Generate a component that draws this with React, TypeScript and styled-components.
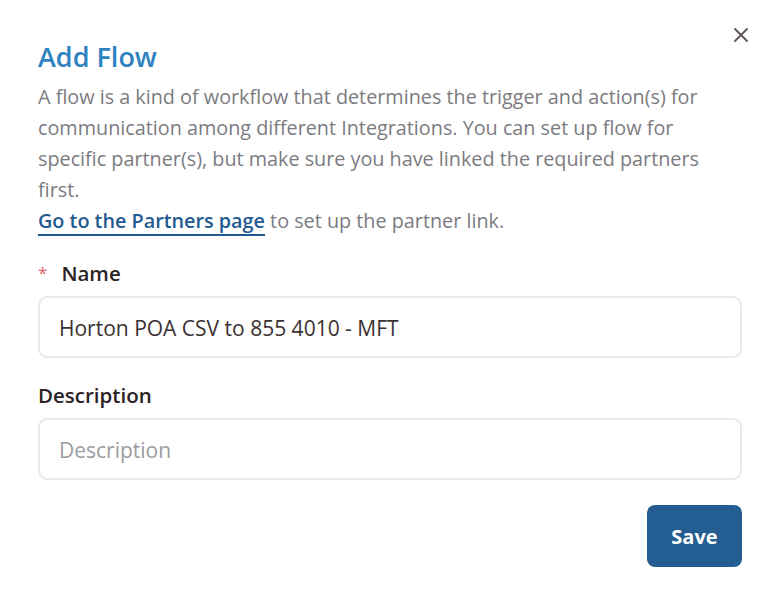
import styled, { createGlobalStyle } from "styled-components";

const GlobalStyle = createGlobalStyle`
    html, body {
        margin: 0;
        padding: 0;
        background: #fff;
        font-family: "Open Sans", "Noto Sans", sans-serif;
    }
`;

const App = () => {
    return (
        <>
            <GlobalStyle />
            <StyledModal>
                <CloseButton aria-label="Close">
                    <svg width="16" height="16" viewBox="0 0 16 16">
                        <path d="M2 2 L14 14 M14 2 L2 14" stroke="#5a5258" strokeWidth="1.8" strokeLinecap="round" />
                    </svg>
                </CloseButton>
                <Title>Add Flow</Title>
                <Intro>
                    A flow is a kind of workflow that determines the trigger and action(s) for communication among
                    different Integrations. You can set up flow for specific partner(s), but make sure you have linked
                    the required partners first.
                    <br />
                    <PartnerLink href="#">Go to the Partners page</PartnerLink> to set up the partner link.
                </Intro>
                <Field>
                    <Label $required>Name</Label>
                    <TextInput defaultValue="Horton POA CSV to 855 4010 - MFT" />
                </Field>
                <Field>
                    <Label>Description</Label>
                    <TextInput placeholder="Description" />
                </Field>
                <Footer>
                    <SaveButton>Save</SaveButton>
                </Footer>
            </StyledModal>
        </>
    );
};

export default App;

const StyledModal = styled.div`
    position: relative;
    width: 778px;
    height: 595px;
    box-sizing: border-box;
    padding: 38px 36px 0 38px;
    background: #fff;
`;

const CloseButton = styled.button`
    position: absolute;
    top: 25px;
    right: 27px;
    width: 20px;
    height: 20px;
    padding: 0;
    border: none;
    background: transparent;
    display: flex;
    align-items: center;
    justify-content: center;
    cursor: pointer;
`;

const Title = styled.h2`
    margin: 0;
    font-size: 27px;
    font-weight: 600;
    line-height: 38px;
    color: #2f82c0;
`;

const Intro = styled.p`
    margin: 5px 0 0;
    font-size: 19.8px;
    line-height: 31px;
    color: #7b7b7f;
`;

const PartnerLink = styled.a`
    color: #1f5a91;
    font-weight: 600;
    text-decoration: none;
    border-bottom: 2px solid #1f5a91;
`;

const Field = styled.div`
    display: flex;
    flex-direction: column;
    gap: 9px;
    margin-top: 23px;
`;

const Label = styled.label<{ $required?: boolean }>`
    font-size: 20.5px;
    font-weight: 600;
    line-height: 28px;
    color: #2b2224;

    &::before {
        content: ${(p) => (p.$required ? '"*"' : "none")};
        color: #e0606a;
        font-weight: 400;
        font-size: 17px;
        margin-right: 14px;
        vertical-align: 2px;
    }
`;

const TextInput = styled.input`
    box-sizing: border-box;
    height: 62px;
    width: 100%;
    padding: 2px 19px 0;
    border: 2px solid #e8e8e8;
    border-radius: 9px;
    font-family: inherit;
    font-size: 21px;
    color: #3a3032;
    outline: none;

    &::placeholder {
        color: #9b9b9f;
    }
`;

const Footer = styled.div`
    display: flex;
    justify-content: flex-end;
    margin-top: 25px;
`;

const SaveButton = styled.button`
    width: 95px;
    height: 62px;
    border: none;
    border-radius: 8px;
    background: #235d91;
    color: #fff;
    font-family: inherit;
    font-size: 20px;
    font-weight: 700;
    cursor: pointer;
`;
